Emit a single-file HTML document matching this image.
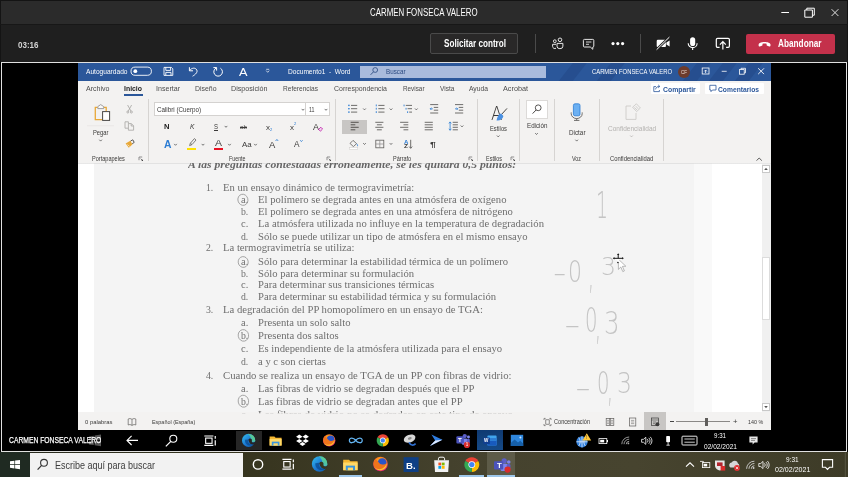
<!DOCTYPE html>
<html lang="es">
<head>
<meta charset="utf-8">
<title>CARMEN FONSECA VALERO</title>
<style>
html,body{margin:0;padding:0;background:#000;}
body{width:848px;height:477px;position:relative;overflow:hidden;font-family:"Liberation Sans", sans-serif;}
#bg div{position:absolute;}
span.s,span.r,span.l{position:absolute;white-space:pre;transform-origin:0 50%;}
span.s{font-family:"Liberation Sans", sans-serif;}
span.r{font-family:"Liberation Serif", serif;}
span.l{font-family:"DejaVu Sans Light", "DejaVu Sans", sans-serif;}
svg#ic{position:absolute;left:0;top:0;}
#tx,#tx2{opacity:0.999;}
</style>
</head>
<body>
<div id="bg">
<div style="left:0px;top:0px;width:848px;height:24px;background:#2b2b2b;"></div>
<div style="left:0px;top:24px;width:848px;height:38px;background:#1f1f1f;"></div>
<div style="left:0px;top:0px;width:848px;height:1px;background:#141414;"></div>
<div style="left:0px;top:0px;width:1px;height:62px;background:#141414;"></div>
<div style="left:847px;top:0px;width:1px;height:62px;background:#141414;"></div>
<div style="left:0px;top:23.6px;width:848px;height:1.0px;background:#171717;"></div>
<div style="left:430px;top:33px;width:88px;height:20.5px;background:#292828;border:1px solid #4a4a4a;box-sizing:border-box;border-radius:2px;"></div>
<div style="left:535px;top:34px;width:1px;height:19px;background:#4a4a4a;"></div>
<div style="left:640px;top:34px;width:1px;height:19px;background:#4a4a4a;"></div>
<div style="left:745.5px;top:33.5px;width:89.0px;height:20.0px;background:#c4314b;border-radius:2px;"></div>
<div style="left:1px;top:62px;width:846px;height:389.7px;background:#000;border:1px solid #e0e0e0;border-bottom-width:1.5px;box-sizing:border-box;"></div>
<div style="left:78px;top:63px;width:692.5px;height:17.5px;background:#2b579a;"></div>
<div style="left:78px;top:80.5px;width:692.5px;height:82.0px;background:#f3f2f1;"></div>
<div style="left:78px;top:162.5px;width:692.5px;height:249.8px;background:#ffffff;"></div>
<div style="left:93.6px;top:163px;width:600.4px;height:249.3px;background:#f4f4f4;"></div>
<div style="left:694px;top:163px;width:18px;height:249.3px;background:#f9f9f9;"></div>
<div style="left:78px;top:162.5px;width:692.5px;height:1.5px;background:linear-gradient(#d0d0d0,rgba(230,230,230,0));"></div>
<div style="left:78px;top:412.3px;width:692.5px;height:17.7px;background:#f3f2f1;"></div>
<div style="left:761.5px;top:164px;width:9.0px;height:248.3px;background:#f0f0f0;"></div>
<div style="left:762px;top:165px;width:8px;height:8px;background:#fff;border:1px solid #c8c8c8;box-sizing:border-box;"></div>
<div style="left:762px;top:403px;width:8px;height:8px;background:#fff;border:1px solid #c8c8c8;box-sizing:border-box;"></div>
<div style="left:762.4px;top:257.4px;width:7.5px;height:62.3px;background:#ffffff;border:1px solid #dcdcdc;box-sizing:border-box;"></div>
<div style="left:566px;top:63px;width:14px;height:17.5px;background:rgba(10,20,70,0.13);transform:skewX(-38deg);"></div>
<div style="left:604px;top:63px;width:14px;height:17.5px;background:rgba(10,20,70,0.13);transform:skewX(-38deg);"></div>
<div style="left:690px;top:63px;width:14px;height:17.5px;background:rgba(10,20,70,0.13);transform:skewX(-38deg);"></div>
<div style="left:716px;top:63px;width:14px;height:17.5px;background:rgba(10,20,70,0.13);transform:skewX(-38deg);"></div>
<div style="left:742px;top:63px;width:14px;height:17.5px;background:rgba(10,20,70,0.13);transform:skewX(-38deg);"></div>
<div style="left:360px;top:65.5px;width:186px;height:12.0px;background:#a9bbdc;"></div>
<div style="left:678px;top:65.5px;width:12px;height:12.0px;background:#6d3b2c;border-radius:50%;"></div>
<div style="left:123.5px;top:94px;width:19.0px;height:1.5px;background:#2b579a;"></div>
<div style="left:650.5px;top:83px;width:49.5px;height:11.3px;background:#ffffff;border-radius:1px;"></div>
<div style="left:705px;top:83px;width:58.5px;height:11.3px;background:#ffffff;border-radius:1px;"></div>
<div style="left:147.5px;top:99px;width:1.0px;height:62px;background:#d6d4d2;"></div>
<div style="left:335.2px;top:99px;width:1.0px;height:62px;background:#d6d4d2;"></div>
<div style="left:477.0px;top:99px;width:1.0px;height:62px;background:#d6d4d2;"></div>
<div style="left:519.0px;top:99px;width:1.0px;height:62px;background:#d6d4d2;"></div>
<div style="left:553.8px;top:99px;width:1.0px;height:62px;background:#d6d4d2;"></div>
<div style="left:598.7px;top:99px;width:1.0px;height:62px;background:#d6d4d2;"></div>
<div style="left:663.3px;top:99px;width:1.0px;height:62px;background:#d6d4d2;"></div>
<div style="left:154.4px;top:102px;width:152.0px;height:14px;background:#ffffff;border:1px solid #d4d2d0;box-sizing:border-box;"></div>
<div style="left:306.4px;top:102px;width:23.2px;height:14px;background:#ffffff;border:1px solid #d4d2d0;border-left:none;box-sizing:border-box;"></div>
<div style="left:214px;top:148px;width:9px;height:2.2px;background:#e81123;"></div>
<div style="left:187.3px;top:148px;width:9.2px;height:2.2px;background:#ffe100;"></div>
<div style="left:342px;top:119.5px;width:24.8px;height:14.2px;background:#c8c6c4;"></div>
<div style="left:525.5px;top:100.3px;width:22.2px;height:18.3px;background:#ffffff;border:1px solid #dcdad8;box-sizing:border-box;"></div>
<div style="left:644px;top:412.3px;width:22px;height:17.7px;background:#c8c6c4;"></div>
<div style="left:676.4px;top:421.3px;width:53.6px;height:0.7px;background:#8a8886;"></div>
<div style="left:705.2px;top:417.6px;width:2.7px;height:8.0px;background:#605e5c;"></div>
<div style="left:670px;top:421.3px;width:4px;height:0.7px;background:#444;"></div>
<div style="left:236px;top:431px;width:26px;height:19px;background:#262626;"></div>
<div style="left:477px;top:430px;width:26.2px;height:20px;background:linear-gradient(#0f3a72,#164a86);"></div>
<div style="left:0px;top:452px;width:848px;height:25px;background:linear-gradient(90deg,#26281c 0%,#37351f 30%,#45422e 55%,#47442f 75%,#3d3b27 100%);"></div>
<div style="left:0px;top:452px;width:29.5px;height:25px;background:#1f2a22;"></div>
<div style="left:29.5px;top:452.6px;width:213.5px;height:24.4px;background:#f2f2f2;"></div>
<div style="left:487px;top:452px;width:28px;height:25px;background:#5d5b48;"></div>
<div style="left:338.8px;top:475px;width:23.7px;height:2px;background:#9ec7ea;"></div>
<div style="left:458.8px;top:475px;width:25.0px;height:2px;background:#9ec7ea;"></div>
<div style="left:487px;top:475px;width:28px;height:2px;background:#9ec7ea;"></div>
</div>
<div id="tx">
<span class="s" style="left:370px;top:8.12px;font-size:10px;line-height:10px;color:#ffffff;transform:scaleX(0.7875);">CARMEN FONSECA VALERO</span>
<span class="s" style="left:18px;top:39.86px;font-size:9.5px;line-height:9.5px;color:#d4d4d4;font-weight:700;transform:scaleX(0.8432);">03:16</span>
<span class="s" style="left:443.5px;top:39.22px;font-size:10px;line-height:10px;color:#ffffff;font-weight:700;transform:scaleX(0.8144);">Solicitar control</span>
<span class="s" style="left:777.5px;top:39.22px;font-size:10px;line-height:10px;color:#ffffff;font-weight:700;transform:scaleX(0.8242);">Abandonar</span>
<span class="s" style="left:86px;top:67.89px;font-size:7.4px;line-height:7.4px;color:#ffffff;transform:scaleX(0.8937);">Autoguardado</span>
<span class="s" style="left:288px;top:67.89px;font-size:7.4px;line-height:7.4px;color:#ffffff;transform:scaleX(0.8915);">Documento1  -  Word</span>
<span class="s" style="left:385.5px;top:68.28px;font-size:7.2px;line-height:7.2px;color:#2b4a80;transform:scaleX(0.8715);">Buscar</span>
<span class="s" style="left:592px;top:68.28px;font-size:7.2px;line-height:7.2px;color:#ffffff;transform:scaleX(0.8153);">CARMEN FONSECA VALERO</span>
<span class="s" style="left:681px;top:70.8px;font-size:4.5px;line-height:4.5px;color:#e8d8d0;transform:scaleX(1.0000);">CF</span>
<span class="s" style="left:239px;top:66.23px;font-size:11.6px;line-height:11.6px;color:#ffffff;transform:scaleX(1.0990);">A</span>
<span class="s" style="left:85.5px;top:85.39px;font-size:8px;line-height:8px;color:#4c4c4c;transform:scaleX(0.8806);">Archivo</span>
<span class="s" style="left:156px;top:85.39px;font-size:8px;line-height:8px;color:#4c4c4c;transform:scaleX(0.8848);">Insertar</span>
<span class="s" style="left:194.5px;top:85.39px;font-size:8px;line-height:8px;color:#4c4c4c;transform:scaleX(0.8632);">Diseño</span>
<span class="s" style="left:231px;top:85.39px;font-size:8px;line-height:8px;color:#4c4c4c;transform:scaleX(0.8923);">Disposición</span>
<span class="s" style="left:283px;top:85.39px;font-size:8px;line-height:8px;color:#4c4c4c;transform:scaleX(0.8199);">Referencias</span>
<span class="s" style="left:334px;top:85.39px;font-size:8px;line-height:8px;color:#4c4c4c;transform:scaleX(0.8697);">Correspondencia</span>
<span class="s" style="left:402.5px;top:85.39px;font-size:8px;line-height:8px;color:#4c4c4c;transform:scaleX(0.7926);">Revisar</span>
<span class="s" style="left:439.5px;top:85.39px;font-size:8px;line-height:8px;color:#4c4c4c;transform:scaleX(0.8220);">Vista</span>
<span class="s" style="left:469px;top:85.39px;font-size:8px;line-height:8px;color:#4c4c4c;transform:scaleX(0.8427);">Ayuda</span>
<span class="s" style="left:503px;top:85.39px;font-size:8px;line-height:8px;color:#4c4c4c;transform:scaleX(0.9065);">Acrobat</span>
<span class="s" style="left:124px;top:85.39px;font-size:8px;line-height:8px;color:#222222;font-weight:700;transform:scaleX(0.8616);">Inicio</span>
<span class="s" style="left:663px;top:85.59px;font-size:7.6px;line-height:7.6px;color:#2b579a;font-weight:700;transform:scaleX(0.9037);">Compartir</span>
<span class="s" style="left:718px;top:85.59px;font-size:7.6px;line-height:7.6px;color:#2b579a;font-weight:700;transform:scaleX(0.8832);">Comentarios</span>
<span class="s" style="left:93px;top:128.89px;font-size:7.4px;line-height:7.4px;color:#3b3a39;transform:scaleX(0.7854);">Pegar</span>
<span class="s" style="left:92px;top:156.37px;font-size:6.4px;line-height:6.4px;color:#3b3a39;transform:scaleX(0.8707);">Portapapeles</span>
<span class="s" style="left:156.5px;top:106.28px;font-size:7.2px;line-height:7.2px;color:#3b3a39;transform:scaleX(0.8692);">Calibri (Cuerpo)</span>
<span class="s" style="left:308.5px;top:106.28px;font-size:7.2px;line-height:7.2px;color:#3b3a39;transform:scaleX(0.7364);">11</span>
<span class="s" style="left:164.3px;top:122.79px;font-size:7.6px;line-height:7.6px;color:#222;font-weight:700;transform:scaleX(1.0028);">N</span>
<span class="s" style="left:189.5px;top:122.79px;font-size:7.6px;line-height:7.6px;color:#3b3a39;font-style:italic;transform:scaleX(0.8862);">K</span>
<span class="s" style="left:213.5px;top:122.79px;font-size:7.6px;line-height:7.6px;color:#3b3a39;transform:scaleX(0.7877);text-decoration:underline;">S</span>
<span class="s" style="left:239.5px;top:124.47px;font-size:6.2px;line-height:6.2px;color:#3b3a39;transform:scaleX(1.0159);text-decoration:line-through;">ab</span>
<span class="s" style="left:266px;top:124.19px;font-size:7.4px;line-height:7.4px;color:#3b3a39;transform:scaleX(1.0802);">x</span>
<span class="s" style="left:270.3px;top:128.45px;font-size:4.2px;line-height:4.2px;color:#2b7cd3;transform:scaleX(0.9813);">2</span>
<span class="s" style="left:290px;top:124.19px;font-size:7.4px;line-height:7.4px;color:#3b3a39;transform:scaleX(1.0802);">x</span>
<span class="s" style="left:294.3px;top:121.95px;font-size:4.2px;line-height:4.2px;color:#2b7cd3;transform:scaleX(0.9813);">2</span>
<span class="s" style="left:312.5px;top:122.6px;font-size:9px;line-height:9px;color:#3b3a39;transform:scaleX(0.9974);">A</span>
<span class="s" style="left:163.5px;top:139.62px;font-size:10px;line-height:10px;color:#2b7cd3;font-weight:700;transform:scaleX(1.0367);">A</span>
<span class="s" style="left:214.8px;top:139.1px;font-size:9px;line-height:9px;color:#3b3a39;transform:scaleX(1.1636);">A</span>
<span class="s" style="left:242px;top:140.99px;font-size:7.8px;line-height:7.8px;color:#3b3a39;transform:scaleX(1.0160);">Aa</span>
<span class="s" style="left:268.7px;top:140.21px;font-size:9.4px;line-height:9.4px;color:#3b3a39;transform:scaleX(1.0055);">A</span>
<span class="s" style="left:294px;top:141.29px;font-size:8.2px;line-height:8.2px;color:#3b3a39;transform:scaleX(1.0057);">A</span>
<span class="s" style="left:229px;top:156.37px;font-size:6.4px;line-height:6.4px;color:#3b3a39;transform:scaleX(0.8289);">Fuente</span>
<span class="s" style="left:392.8px;top:156.37px;font-size:6.4px;line-height:6.4px;color:#3b3a39;transform:scaleX(0.8680);">Párrafo</span>
<span class="s" style="left:403.6px;top:139.66px;font-size:5.4px;line-height:5.4px;color:#2b7cd3;font-weight:700;transform:scaleX(1.1264);">A</span>
<span class="s" style="left:403.8px;top:144.46px;font-size:5.4px;line-height:5.4px;color:#3b3a39;font-weight:700;transform:scaleX(1.2133);">Z</span>
<span class="s" style="left:429.6px;top:141.39px;font-size:7.6px;line-height:7.6px;color:#3b3a39;font-weight:700;transform:scaleX(1.3697);">¶</span>
<span class="l" style="left:490.6px;top:103.47px;font-size:20px;line-height:20px;color:#3b3a39;transform:scaleX(0.8329);">A</span>
<span class="s" style="left:490px;top:124.79px;font-size:7.6px;line-height:7.6px;color:#3b3a39;transform:scaleX(0.7598);">Estilos</span>
<span class="s" style="left:485.6px;top:156.37px;font-size:6.4px;line-height:6.4px;color:#3b3a39;transform:scaleX(0.8551);">Estilos</span>
<span class="s" style="left:526.6px;top:122.29px;font-size:7.6px;line-height:7.6px;color:#3b3a39;transform:scaleX(0.8191);">Edición</span>
<span class="s" style="left:568.5px;top:128.79px;font-size:7.6px;line-height:7.6px;color:#3b3a39;transform:scaleX(0.8315);">Dictar</span>
<span class="s" style="left:572px;top:156.37px;font-size:6.4px;line-height:6.4px;color:#3b3a39;transform:scaleX(0.8433);">Voz</span>
<span class="s" style="left:607.5px;top:124.79px;font-size:7.6px;line-height:7.6px;color:#b4b2b0;transform:scaleX(0.8583);">Confidencialidad</span>
<span class="s" style="left:609.6px;top:156.37px;font-size:6.4px;line-height:6.4px;color:#3b3a39;transform:scaleX(0.9140);">Confidencialidad</span>
<span class="s" style="left:84.6px;top:419.47px;font-size:6.2px;line-height:6.2px;color:#3b3a39;transform:scaleX(0.9479);">0 palabras</span>
<span class="s" style="left:151.8px;top:419.47px;font-size:6.2px;line-height:6.2px;color:#3b3a39;transform:scaleX(0.8783);">Español (España)</span>
<span class="s" style="left:554px;top:419.37px;font-size:6.4px;line-height:6.4px;color:#3b3a39;transform:scaleX(0.8734);">Concentración</span>
<span class="s" style="left:747.5px;top:419.47px;font-size:6.2px;line-height:6.2px;color:#3b3a39;transform:scaleX(0.8663);">140 %</span>
<span class="s" style="left:733px;top:418.29px;font-size:8px;line-height:8px;color:#3b3a39;transform:scaleX(0.9632);">+</span>
<span class="r" style="left:188px;top:158.92px;font-size:11.2px;line-height:11.2px;color:#666666;font-weight:700;font-style:italic;transform:scaleX(1.0404);clip-path:inset(4.2px 0 0 0);">A las preguntas contestadas erróneamente, se les quitará 0,5 puntos:</span>
<span class="r" style="left:206px;top:181.54px;font-size:10.7px;line-height:10.7px;color:#6e6e6e;transform:scaleX(0.9107);">1.</span>
<span class="r" style="left:223px;top:181.54px;font-size:10.7px;line-height:10.7px;color:#6e6e6e;transform:scaleX(0.9931);">En un ensayo dinámico de termogravimetría:</span>
<span class="r" style="left:241px;top:193.54px;font-size:10.7px;line-height:10.7px;color:#6e6e6e;transform:scaleX(0.9836);">a.</span>
<span class="r" style="left:257.8px;top:193.54px;font-size:10.7px;line-height:10.7px;color:#6e6e6e;transform:scaleX(0.9980);">El polímero se degrada antes en una atmósfera de oxígeno</span>
<span class="r" style="left:241px;top:205.74px;font-size:10.7px;line-height:10.7px;color:#6e6e6e;transform:scaleX(0.9107);">b.</span>
<span class="r" style="left:257.8px;top:205.74px;font-size:10.7px;line-height:10.7px;color:#6e6e6e;transform:scaleX(0.9976);">El polímero se degrada antes en una atmósfera de nitrógeno</span>
<span class="r" style="left:241px;top:218.24px;font-size:10.7px;line-height:10.7px;color:#6e6e6e;transform:scaleX(0.9836);">c.</span>
<span class="r" style="left:257.8px;top:218.24px;font-size:10.7px;line-height:10.7px;color:#6e6e6e;transform:scaleX(0.9987);">La atmósfera utilizada no influye en la temperatura de degradación</span>
<span class="r" style="left:241px;top:230.54px;font-size:10.7px;line-height:10.7px;color:#6e6e6e;transform:scaleX(0.9107);">d.</span>
<span class="r" style="left:257.8px;top:230.54px;font-size:10.7px;line-height:10.7px;color:#6e6e6e;transform:scaleX(0.9989);">Sólo se puede utilizar un tipo de atmósfera en el mismo ensayo</span>
<span class="r" style="left:206px;top:242.24px;font-size:10.7px;line-height:10.7px;color:#6e6e6e;transform:scaleX(0.9107);">2.</span>
<span class="r" style="left:223px;top:242.24px;font-size:10.7px;line-height:10.7px;color:#6e6e6e;transform:scaleX(0.9957);">La termogravimetría se utiliza:</span>
<span class="r" style="left:241px;top:255.84px;font-size:10.7px;line-height:10.7px;color:#6e6e6e;transform:scaleX(0.9836);">a.</span>
<span class="r" style="left:257.8px;top:255.84px;font-size:10.7px;line-height:10.7px;color:#6e6e6e;transform:scaleX(0.9965);">Sólo para determinar la estabilidad térmica de un polímero</span>
<span class="r" style="left:241px;top:267.54px;font-size:10.7px;line-height:10.7px;color:#6e6e6e;transform:scaleX(0.9107);">b.</span>
<span class="r" style="left:257.8px;top:267.54px;font-size:10.7px;line-height:10.7px;color:#6e6e6e;transform:scaleX(0.9968);">Sólo para determinar su formulación</span>
<span class="r" style="left:241px;top:279.44px;font-size:10.7px;line-height:10.7px;color:#6e6e6e;transform:scaleX(0.9836);">c.</span>
<span class="r" style="left:257.8px;top:279.44px;font-size:10.7px;line-height:10.7px;color:#6e6e6e;transform:scaleX(0.9961);">Para determinar sus transiciones térmicas</span>
<span class="r" style="left:241px;top:291.24px;font-size:10.7px;line-height:10.7px;color:#6e6e6e;transform:scaleX(0.9107);">d.</span>
<span class="r" style="left:257.8px;top:291.24px;font-size:10.7px;line-height:10.7px;color:#6e6e6e;transform:scaleX(0.9970);">Para determinar su estabilidad térmica y su formulación</span>
<span class="r" style="left:206px;top:303.94px;font-size:10.7px;line-height:10.7px;color:#6e6e6e;transform:scaleX(0.9107);">3.</span>
<span class="r" style="left:223px;top:303.94px;font-size:10.7px;line-height:10.7px;color:#6e6e6e;transform:scaleX(0.9988);">La degradación del PP homopolímero en un ensayo de TGA:</span>
<span class="r" style="left:241px;top:316.84px;font-size:10.7px;line-height:10.7px;color:#6e6e6e;transform:scaleX(0.9836);">a.</span>
<span class="r" style="left:257.8px;top:316.84px;font-size:10.7px;line-height:10.7px;color:#6e6e6e;transform:scaleX(0.9955);">Presenta un solo salto</span>
<span class="r" style="left:241px;top:329.74px;font-size:10.7px;line-height:10.7px;color:#6e6e6e;transform:scaleX(0.9107);">b.</span>
<span class="r" style="left:257.8px;top:329.74px;font-size:10.7px;line-height:10.7px;color:#6e6e6e;transform:scaleX(0.9994);">Presenta dos saltos</span>
<span class="r" style="left:241px;top:343.34px;font-size:10.7px;line-height:10.7px;color:#6e6e6e;transform:scaleX(0.9836);">c.</span>
<span class="r" style="left:257.8px;top:343.34px;font-size:10.7px;line-height:10.7px;color:#6e6e6e;transform:scaleX(0.9986);">Es independiente de la atmósfera utilizada para el ensayo</span>
<span class="r" style="left:241px;top:356.34px;font-size:10.7px;line-height:10.7px;color:#6e6e6e;transform:scaleX(0.9107);">d.</span>
<span class="r" style="left:257.8px;top:356.34px;font-size:10.7px;line-height:10.7px;color:#6e6e6e;transform:scaleX(0.9961);">a y c son ciertas</span>
<span class="r" style="left:206px;top:369.84px;font-size:10.7px;line-height:10.7px;color:#6e6e6e;transform:scaleX(0.9107);">4.</span>
<span class="r" style="left:223px;top:369.84px;font-size:10.7px;line-height:10.7px;color:#6e6e6e;transform:scaleX(1.0031);">Cuando se realiza un ensayo de TGA de un PP con fibras de vidrio:</span>
<span class="r" style="left:241px;top:382.74px;font-size:10.7px;line-height:10.7px;color:#6e6e6e;transform:scaleX(0.9836);">a.</span>
<span class="r" style="left:257.8px;top:382.74px;font-size:10.7px;line-height:10.7px;color:#6e6e6e;transform:scaleX(1.0001);">Las fibras de vidrio se degradan después que el PP</span>
<span class="r" style="left:241px;top:395.74px;font-size:10.7px;line-height:10.7px;color:#6e6e6e;transform:scaleX(0.9107);">b.</span>
<span class="r" style="left:257.8px;top:395.74px;font-size:10.7px;line-height:10.7px;color:#6e6e6e;transform:scaleX(1.0010);">Las fibras de vidrio se degradan antes que el PP</span>
<span class="r" style="left:241px;top:408.54px;font-size:10.7px;line-height:10.7px;color:#6e6e6e;transform:scaleX(0.9836);clip-path:inset(0 0 5.9px 0);">c.</span>
<span class="r" style="left:257.8px;top:408.54px;font-size:10.7px;line-height:10.7px;color:#6e6e6e;transform:scaleX(1.0336);clip-path:inset(0 0 5.9px 0);">Las fibras de vidrio no se degradan en este tipo de ensayo</span>
<span class="l" style="left:596px;top:186.35px;font-size:38px;line-height:38px;color:#c4c4c4;transform:scaleX(0.4961);">1</span>
<span class="l" style="left:552.6px;top:258.22px;font-size:30px;line-height:30px;color:#c4c4c4;transform:scaleX(1.2375);">-</span>
<span class="l" style="left:568px;top:255.77px;font-size:31px;line-height:31px;color:#c4c4c4;transform:scaleX(0.7094);">0</span>
<span class="l" style="left:588px;top:251.28px;font-size:44px;line-height:44px;color:#c4c4c4;transform:scaleX(0.4286);">,</span>
<span class="l" style="left:601px;top:255.2px;font-size:24px;line-height:24px;color:#c4c4c4;transform:scaleX(0.9816);">3</span>
<span class="l" style="left:564px;top:309.92px;font-size:30px;line-height:30px;color:#c4c4c4;transform:scaleX(1.5330);">-</span>
<span class="l" style="left:584.8px;top:304.38px;font-size:33px;line-height:33px;color:#c4c4c4;transform:scaleX(0.5952);">0</span>
<span class="l" style="left:594.5px;top:302.28px;font-size:44px;line-height:44px;color:#c4c4c4;transform:scaleX(0.4286);">,</span>
<span class="l" style="left:604.4px;top:306.81px;font-size:32.5px;line-height:32.5px;color:#c4c4c4;transform:scaleX(0.7541);">3</span>
<span class="l" style="left:575px;top:373.22px;font-size:30px;line-height:30px;color:#c4c4c4;transform:scaleX(1.4776);">-</span>
<span class="l" style="left:597.3px;top:368.25px;font-size:31.5px;line-height:31.5px;color:#c4c4c4;transform:scaleX(0.6235);">0</span>
<span class="l" style="left:606.5px;top:364.28px;font-size:44px;line-height:44px;color:#c4c4c4;transform:scaleX(0.4286);">,</span>
<span class="l" style="left:617px;top:368.52px;font-size:28.7px;line-height:28.7px;color:#c4c4c4;transform:scaleX(0.8212);">3</span>
<span class="s" style="left:714px;top:433.32px;font-size:6.5px;line-height:6.5px;color:#ffffff;transform:scaleX(0.9481);">9:31</span>
<span class="s" style="left:704px;top:443.62px;font-size:6.5px;line-height:6.5px;color:#ffffff;transform:scaleX(1.0139);">02/02/2021</span>
<span class="s" style="left:55px;top:461.22px;font-size:10px;line-height:10px;color:#3c3c3c;transform:scaleX(0.8995);">Escribe aquí para buscar</span>
<span class="s" style="left:786.4px;top:455.89px;font-size:8px;line-height:8px;color:#ffffff;transform:scaleX(0.8088);">9:31</span>
<span class="s" style="left:775.3px;top:466.29px;font-size:8px;line-height:8px;color:#ffffff;transform:scaleX(0.8840);">02/02/2021</span>
</div>
<svg id="ic" width="848" height="477" viewBox="0 0 848 477" fill="none">
<g stroke="#e6e6e6" stroke-width="1"><circle cx="554.8" cy="41.2" r="1.4"/><circle cx="560" cy="39.8" r="1.8"/><path d="M557 43.4H562.9V46.2A2.95 2.5 0 0 1 557 46.2Z"/><path d="M556 44.3H552.6V46.4A2.2 2.2 0 0 0 556 48.2"/></g>
<g stroke="#e6e6e6" stroke-width="1"><path d="M584.4 39.4H592.8A1 1 0 0 1 593.8 40.4V46A1 1 0 0 1 592.8 47V49.3L590.3 47H584.4A1 1 0 0 1 583.4 46V40.4A1 1 0 0 1 584.4 39.4Z"/><path d="M586 42H591.4M586 44.3H589" stroke-width="0.9"/></g>
<g fill="#ffffff"><circle cx="613" cy="43.6" r="1.6"/><circle cx="617.8" cy="43.6" r="1.6"/><circle cx="622.6" cy="43.6" r="1.6"/></g>
<rect x="656.7" y="39.8" width="9.2" height="7.3" rx="1.2" fill="#ffffff"/><path d="M666.4 42.6L669.6 40.4V46.6L666.4 44.4Z" fill="#ffffff"/><path d="M669.6 36.9L656.3 49.9" stroke="#1f1f1f" stroke-width="2.6"/><path d="M669.4 37.1L656.6 49.7" stroke="#ffffff" stroke-width="1"/>
<rect x="690.1" y="37.2" width="5.1" height="8.8" rx="2.55" fill="#ffffff"/><path d="M688.2 43.2A4.45 4.45 0 0 0 697.1 43.2M692.65 47.6V50" stroke="#ffffff" stroke-width="1.1"/>
<g stroke="#ffffff" stroke-width="1.2"><path d="M719.6 47.4H717.6A1.3 1.3 0 0 1 716.3 46.1V39.6A1.3 1.3 0 0 1 717.6 38.3H728.1A1.3 1.3 0 0 1 729.4 39.6V46.1A1.3 1.3 0 0 1 728.1 47.4H726.1"/><path d="M722.85 49.4V42M719.9 44.6L722.85 41.6L725.8 44.6"/></g>
<path d="M758.6 44.6C758.6 41.2 770.5 41.2 770.5 44.6V45.6C770.5 46.3 769.9 46.6 769.3 46.4L767.3 45.8C766.8 45.6 766.6 45.2 766.6 44.7V43.8C765.2 43.3 763.9 43.3 762.5 43.8V44.7C762.5 45.2 762.3 45.6 761.8 45.8L759.8 46.4C759.2 46.6 758.6 46.3 758.6 45.6Z" fill="#ffffff"/>
<path d="M781.3 12.5H789" stroke="#ffffff" stroke-width="1"/><path d="M804.8 10H812.4V17.2H804.8Z" stroke="#ffffff" stroke-width="1"/><path d="M806.8 10V8.2H814.3V15.2H812.4" stroke="#ffffff" stroke-width="1"/><path d="M831.6 9.2L838.4 16M838.4 9.2L831.6 16" stroke="#e0e0e0" stroke-width="1"/>
<rect x="131" y="67.1" width="20.4" height="8.2" rx="4.1" stroke="#ffffff" stroke-width="0.9"/><circle cx="135.3" cy="71.2" r="1.9" fill="#ffffff"/>
<g stroke="#ffffff" stroke-width="0.9"><path d="M164 67.4H171.4L172.8 68.8V75.4H164Z"/><path d="M165.8 67.4V70.4H170.6V67.4M165.8 75.4V72.4H171V75.4"/></g>
<g stroke="#ffffff" stroke-width="1"><path d="M189.4 67.2V70.8H193"/><path d="M189.6 70.6C191.6 67.6 195.6 67.4 196.8 70C197.8 72.2 195.6 74.4 192.6 76.2"/></g>
<g stroke="#ffffff" stroke-width="1"><path d="M213.4 67.6H216.6V70.6"/><path d="M216.2 68A4.3 4.3 0 1 0 220.4 68.2"/></g>
<path d="M266.2 69.3H269.2" stroke="#ffffff" stroke-width="0.7"/><path d="M266.2 70.6L267.7 72.3L269.2 70.6" stroke="#ffffff" stroke-width="0.7"/>
<circle cx="375.2" cy="70" r="2.4" stroke="#2b4a80" stroke-width="0.8"/><path d="M373.5 71.8L370.6 74.8" stroke="#2b4a80" stroke-width="0.9"/>
<g stroke="#ffffff" stroke-width="0.8"><rect x="702.2" y="68" width="6.8" height="6"/><path d="M705.6 73V70.2M704.3 71.4L705.6 70L706.9 71.4"/><path d="M721.7 71.3H726.7"/><rect x="739.6" y="69.6" width="4.6" height="4.6"/><path d="M741 69.6V68.3H745.5V72.8H744.2"/><path d="M758.2 68.3L764 74.1M764 68.3L758.2 74.1" stroke-width="0.9"/></g>
<g stroke="#2b579a" stroke-width="0.8"><path d="M656 86.6H653.8V91.6H659.4V90"/><path d="M655.6 89.4C655.8 87.4 657.4 86.4 659.6 86.4M658.2 84.9L659.8 86.4L658.2 87.9"/></g>
<path d="M709.8 85.3H716V90H712.4L711 91.6V90H709.8Z" stroke="#2b579a" stroke-width="0.8"/>
<path d="M97.6 107.4H95.3V119.6H102.2M104 107.4H106.2V111" stroke="#e8a838" stroke-width="1.3"/><path d="M97.8 108.6V106.6L100.7 104.6L103.7 106.6V108.6Z" fill="#fafafa" stroke="#8a8886" stroke-width="0.8"/><rect x="102.6" y="111.6" width="7" height="8.8" fill="#ffffff" stroke="#484644" stroke-width="1"/>
<path d="M87 125.7H114" stroke="#e4e2e0" stroke-width="0.6"/>
<path d="M99.3 139.70000000000002L100.6 141.1L101.89999999999999 139.70000000000002" stroke="#555" stroke-width="0.8"/>
<g stroke="#a6a4a2" stroke-width="0.8"><path d="M127.6 105L131 111.2M131.6 105L128.2 111.2"/><circle cx="127.8" cy="112" r="1"/><circle cx="131.4" cy="112" r="1"/></g>
<g stroke="#a6a4a2" stroke-width="0.8"><path d="M128.4 123.6V121.8H125V128.2H128.2"/><path d="M128.4 123.6H131.4L133.6 125.8V130.2H128.4Z"/><path d="M131.2 123.8V126H133.4"/></g>
<path d="M125.6 143.6L130.4 140.8L132.4 144.6L128.8 147.8Z" fill="#e8a838"/><path d="M130.6 141L132.8 139.8L134.2 142.4L132.2 143.8" stroke="#484644" stroke-width="0.9"/><path d="M127.4 144.6L129.6 146.4" stroke="#fff" stroke-width="0.6"/>
<path d="M139 157H142.2M139 157V160.2" stroke="#666" stroke-width="0.7"/><path d="M143 159.2V161H141.2Z" fill="#444"/><path d="M140.7 158.7L142.6 160.6" stroke="#444" stroke-width="0.7"/>
<path d="M301.7 108.89999999999999L303 110.3L304.3 108.89999999999999" stroke="#555" stroke-width="0.8"/>
<path d="M324.7 108.89999999999999L326 110.3L327.3 108.89999999999999" stroke="#555" stroke-width="0.8"/>
<path d="M224.7 125.89999999999999L226 127.3L227.3 125.89999999999999" stroke="#555" stroke-width="0.8"/>
<path d="M174.2 143.9L175.5 145.29999999999998L176.8 143.9" stroke="#555" stroke-width="0.8"/>
<path d="M201.7 143.9L203 145.29999999999998L204.3 143.9" stroke="#555" stroke-width="0.8"/>
<path d="M228.2 143.9L229.5 145.29999999999998L230.8 143.9" stroke="#555" stroke-width="0.8"/>
<path d="M254.2 143.9L255.5 145.29999999999998L256.8 143.9" stroke="#555" stroke-width="0.8"/>
<path d="M318.6 129.4L320.8 127.2L322.6 129L320.4 131.2Z" stroke="#b4009e" stroke-width="0.7" fill="#f3d0ee"/>
<path d="M189.6 145.6L190.4 143.2L194.4 138.6L196 140L192 144.6Z" stroke="#605e5c" stroke-width="0.8"/><path d="M190.4 143.2L192 144.6" stroke="#605e5c" stroke-width="0.7"/>
<path d="M275.6 141L276.9 139.4L278.2 141" stroke="#2b7cd3" stroke-width="0.8"/><path d="M300.2 140.2L301.4 141.6L302.6 140.2" stroke="#2b7cd3" stroke-width="0.8"/>
<path d="M327 157H330.2M327 157V160.2" stroke="#666" stroke-width="0.7"/><path d="M331 159.2V161H329.2Z" fill="#444"/><path d="M328.7 158.7L330.6 160.6" stroke="#444" stroke-width="0.7"/>
<path d="M351 105.4H357.2M351 108.7H357.2M351 112.1H357.2" stroke="#605e5c" stroke-width="0.9"/>
<rect x="348.2" y="104.7" width="1.4" height="1.4" fill="#2b7cd3"/><rect x="348.2" y="108.0" width="1.4" height="1.4" fill="#2b7cd3"/><rect x="348.2" y="111.39999999999999" width="1.4" height="1.4" fill="#2b7cd3"/>
<path d="M363.2 108.5L364.5 109.9L365.8 108.5" stroke="#555" stroke-width="0.8"/>
<path d="M378.3 105.4H384.5M378.3 108.7H384.5M378.3 112.1H384.5" stroke="#605e5c" stroke-width="0.9"/>
<rect x="375.8" y="104.5" width="0.9" height="1.8" fill="#2b7cd3"/><rect x="375.8" y="107.8" width="0.9" height="1.8" fill="#2b7cd3"/><rect x="375.8" y="111.19999999999999" width="0.9" height="1.8" fill="#2b7cd3"/>
<path d="M389.7 108.5L391 109.9L392.3 108.5" stroke="#555" stroke-width="0.8"/>
<path d="M405.8 105.4H412.0M407.6 108.7H412.0M409.20000000000005 112.1H412.0" stroke="#605e5c" stroke-width="0.9"/>
<rect x="403.6" y="104.6" width="0.9" height="1.7" fill="#2b7cd3"/><rect x="405.6" y="107.9" width="0.9" height="1.7" fill="#2b7cd3"/><rect x="407.2" y="111.3" width="0.9" height="1.7" fill="#2b7cd3"/>
<path d="M415.0 108.5L416.3 109.9L417.6 108.5" stroke="#555" stroke-width="0.8"/>
<path d="M430.2 104.6H438.2M433.8 107.4H438.2M433.8 110.2H438.2M430.2 113H438.2" stroke="#605e5c" stroke-width="0.9"/>
<path d="M432.8 108.8H430.4M431.4 107.6L430.2 108.8L431.4 110" stroke="#2b7cd3" stroke-width="0.8"/>
<path d="M455 104.6H463.2M458.8 107.4H463.2M458.8 110.2H463.2M455 113H463.2" stroke="#605e5c" stroke-width="0.9"/>
<path d="M455 108.8H457.6M456.6 107.6L457.8 108.8L456.6 110" stroke="#2b7cd3" stroke-width="0.8"/>
<path d="M350.7 122.3H358.7M350.7 124.8H355.3M350.7 127.3H358.7M350.7 129.8H355.3" stroke="#484644" stroke-width="0.9"/>
<path d="M375.3 122.3H383.40000000000003M376.90000000000003 124.8H381.8M375.3 127.3H383.40000000000003M376.90000000000003 129.8H381.8" stroke="#605e5c" stroke-width="0.9"/>
<path d="M400.1 122.3H408.3M403.5 124.8H408.3M400.1 127.3H408.3M403.5 129.8H408.3" stroke="#605e5c" stroke-width="0.9"/>
<path d="M424.7 122.3H432.8M424.7 124.8H432.8M424.7 127.3H432.8M424.7 129.8H432.8" stroke="#605e5c" stroke-width="0.9"/>
<path d="M452.7 122.3H457.9M452.7 124.8H457.9M452.7 127.3H457.9M452.7 129.8H457.9" stroke="#605e5c" stroke-width="0.9"/>
<path d="M450.1 122V130.2M448.9 123.4L450.1 121.9L451.3 123.4M448.9 128.8L450.1 130.3L451.3 128.8" stroke="#2b7cd3" stroke-width="0.8"/>
<path d="M460.7 125.5L462 126.9L463.3 125.5" stroke="#555" stroke-width="0.8"/>
<path d="M353 140.4L356.6 143.6L353.4 146.6L350 143.4Z" stroke="#605e5c" stroke-width="0.8"/><path d="M356.8 143.8C357.8 145 357.8 146 357 146.4" stroke="#2b7cd3" stroke-width="0.8"/><rect x="349.6" y="147.6" width="8.2" height="1.6" fill="#ffffff" stroke="#c8c6c4" stroke-width="0.4"/>
<path d="M363.2 143.10000000000002L364.5 144.5L365.8 143.10000000000002" stroke="#555" stroke-width="0.8"/>
<rect x="375.8" y="140.2" width="8" height="7.6" stroke="#605e5c" stroke-width="0.8"/><path d="M379.8 140.2V147.8M375.8 144H383.8" stroke="#8a8886" stroke-width="0.7"/>
<path d="M389.7 143.10000000000002L391 144.5L392.3 143.10000000000002" stroke="#555" stroke-width="0.8"/>
<path d="M410.7 139.8V148.2M409.2 146.6L410.7 148.3L412.2 146.6" stroke="#605e5c" stroke-width="0.9"/>
<path d="M469 157H472.2M469 157V160.2" stroke="#666" stroke-width="0.7"/><path d="M473 159.2V161H471.2Z" fill="#444"/><path d="M470.7 158.7L472.6 160.6" stroke="#444" stroke-width="0.7"/>
<path d="M507 108.4L501.4 114.6" stroke="#484644" stroke-width="1"/><path d="M501.2 113.6C499 113.8 497.6 115.8 496.6 120.4C499.8 120.8 502.8 119.4 503.4 116Z" fill="#4a90e2"/>
<path d="M496.9 135.5L498.2 136.89999999999998L499.5 135.5" stroke="#555" stroke-width="0.8"/>
<path d="M511 157H514.2M511 157V160.2" stroke="#666" stroke-width="0.7"/><path d="M515 159.2V161H513.2Z" fill="#444"/><path d="M512.7 158.7L514.6 160.6" stroke="#444" stroke-width="0.7"/>
<circle cx="538.2" cy="107.8" r="2.9" stroke="#484644" stroke-width="0.9"/><path d="M536.2 109.9L532.6 113.6" stroke="#484644" stroke-width="1"/>
<path d="M535.2 133.10000000000002L536.5 134.5L537.8 133.10000000000002" stroke="#555" stroke-width="0.8"/>
<rect x="573.4" y="103.8" width="6.6" height="12" rx="1.6" fill="#6cb0f2" stroke="#2b7cd3" stroke-width="0.8"/><path d="M571.2 112.4V113.6A5.5 5 0 0 0 582.2 113.6V112.4M576.7 118.6V120.4M574 120.4H579.4" stroke="#605e5c" stroke-width="0.9"/>
<path d="M575.4000000000001 139.70000000000002L576.7 141.1L578.0 139.70000000000002" stroke="#555" stroke-width="0.8"/>
<g stroke="#c8c6c4" stroke-width="0.8"><path d="M631 106H626V119.4H636V113"/><path d="M632.6 107.2L636.4 103.8L640.4 108L636.6 111.6Z"/><path d="M634.4 107.4L637 110M635.8 106.2L638.2 108.8"/></g>
<path d="M630.2 135.5L631.5 136.89999999999998L632.8 135.5" stroke="#b4b2b0" stroke-width="0.8"/>
<path d="M756.6 160.6L759.2 158L761.8 160.6" stroke="#444" stroke-width="0.9"/>
<path d="M764.2 170L766 167.8L767.8 170Z" fill="#555"/><path d="M764.2 406L766 408.2L767.8 406Z" fill="#555"/>
<g stroke="#8a8a8a" stroke-width="0.7"><ellipse cx="242.9" cy="199.8" rx="5" ry="5.6" transform="rotate(-15 242.9 199.8)"/><ellipse cx="243.2" cy="262" rx="5" ry="5.4" transform="rotate(-10 243.2 262)"/><ellipse cx="243.4" cy="335.4" rx="5.2" ry="5.8" transform="rotate(-10 243.4 335.4)"/><ellipse cx="243.4" cy="401.2" rx="5.2" ry="6" transform="rotate(-10 243.4 401.2)"/></g>
<path d="M618.4 259.2V269.4L620.8 267L622.8 271.6L624.4 270.9L622.4 266.4L625.8 266.2Z" fill="#ffffff" stroke="#8c8c8c" stroke-width="0.6"/><path d="M618.2 254.2V262.4M613.6 258.3H623" stroke="#ffffff" stroke-width="2.2"/><path d="M618.2 254.6V258.3M613.8 258.3H622.8" stroke="#111" stroke-width="1"/><path d="M617 255L618.2 253.2L619.4 255ZM614.4 257.1L612.8 258.3L614.4 259.5ZM622.2 257.1L623.8 258.3L622.2 259.5Z" fill="#111"/><circle cx="617.9" cy="262.5" r="0.8" fill="#111"/>
<g stroke="#605e5c" stroke-width="0.7"><path d="M132 419.4C130.6 418.4 129.4 418.4 128.2 419V425C129.4 424.4 130.6 424.4 132 425.4C133.4 424.4 134.6 424.4 135.8 425V419C134.6 418.4 133.4 418.4 132 419.4ZM132 419.4V425.4"/></g>
<g stroke="#605e5c" stroke-width="0.7"><path d="M544 420V418.4H545.6M549.4 418.4H551V420M551 424V425.6H549.4M545.6 425.6H544V424"/><rect x="545.8" y="419.8" width="3.4" height="4.4"/></g>
<g stroke="#605e5c" stroke-width="0.7"><rect x="606.2" y="418.4" width="3.6" height="7"/><rect x="610.2" y="418.4" width="3.6" height="7"/><path d="M607 420.4H609M607 422H609M607 423.6H609M611 420.4H613M611 422H613M611 423.6H613" stroke-width="0.5"/></g>
<g stroke="#605e5c" stroke-width="0.7"><rect x="629.4" y="418" width="6.4" height="8"/><path d="M631 420.4H634.2M631 422H634.2M631 423.6H634.2" stroke-width="0.5"/></g>
<g stroke="#3b3a39" stroke-width="0.7"><rect x="651.4" y="418" width="7" height="7.6"/><path d="M651.4 420H658.4M653 422H656M653 423.6H655" stroke-width="0.5"/></g><circle cx="657.4" cy="424.2" r="2" fill="#3b3a39"/>
<defs><linearGradient id="edg" x1="0" y1="0" x2="1" y2="1"><stop offset="0" stop-color="#35c1f1"/><stop offset="0.55" stop-color="#1b75d0"/><stop offset="1" stop-color="#0c59a4"/></linearGradient><linearGradient id="edg2" x1="0" y1="1" x2="1" y2="0"><stop offset="0" stop-color="#2ea8e0"/><stop offset="1" stop-color="#6fdc6a"/></linearGradient><radialGradient id="ffx" cx="0.5" cy="0.4" r="0.6"><stop offset="0" stop-color="#ffd43a"/><stop offset="0.6" stop-color="#ff8a16"/><stop offset="1" stop-color="#e31587"/></radialGradient></defs>
<g fill="#6a6a6a" opacity="0.8"><path d="M89 436.4L93.8 435.7V440H89ZM94.6 435.6L101 434.6V440H94.6ZM89 440.8H93.8V445.1L89 444.4ZM94.6 440.8H101V446.2L94.6 445.2Z"/></g>
<path d="M138 440.4H127M131.6 435.8L127 440.4L131.6 445" stroke="#fff" stroke-width="1.1"/>
<circle cx="173.3" cy="438.8" r="3.5" stroke="#fff" stroke-width="1.1"/><path d="M170.8 441.4L165.8 446.4" stroke="#fff" stroke-width="1.2"/>
<g stroke="#fff" stroke-width="1.1"><rect x="205.668" y="438.068" width="6.384000000000001" height="5.264000000000001"/><path d="M204.3 436H213.42000000000002M204.3 445.4H213.42000000000002M215.244 436V438.82M215.244 440.23V445.4" stroke-width="1.2"/></g>
<circle cx="248.6" cy="440.4" r="6.6" fill="url(#edg)"/><path d="M247.94 433.93A6.6 6.6 0 0 1 255.20 441.19C253.88 442.71 251.57 442.71 249.92 441.06C251.90 438.42 249.92 435.45 247.94 433.93Z" fill="url(#edg2)"/><path d="M248.27 439.74C249.59 437.43 252.23 438.42 251.90 440.40C251.24 442.38 253.55 443.17 255.33 441.72L254.87 443.70C252.56 445.68 249.26 444.36 248.27 439.74Z" fill="#262626"/><path d="M244.97 439.74C244.64 445.02 249.92 447.00 253.88 444.36C250.58 445.35 247.28 443.04 248.27 439.41Z" fill="#0a4a90" opacity="0.75"/>
<path d="M269.6 436.448H274.40000000000003L275.6 437.8H281.6V445.59999999999997H269.6Z" fill="#f5b731"/><rect x="269.6" y="438.94399999999996" width="12" height="6.656000000000001" fill="#ffd968"/><rect x="271.76000000000005" y="441.64799999999997" width="7.68" height="3.9520000000000004" fill="#3a96dd"/><rect x="273.44" y="443.312" width="4.32" height="2.2880000000000003" fill="#ffd968"/>
<g fill="#fff"><path d="M299.3 434.6L302.5 436.7L299.3 438.8L296.1 436.7Z"/><path d="M305.7 434.6L308.9 436.7L305.7 438.8L302.5 436.7Z"/><path d="M299.3 438.9L302.5 441L299.3 443.1L296.1 441Z"/><path d="M305.7 438.9L308.9 441L305.7 443.1L302.5 441Z"/><path d="M302.5 441.9L305.6 443.9L302.5 446L299.4 443.9Z"/></g>
<circle cx="329.2" cy="440.4" r="6.2" fill="url(#ffx)"/><circle cx="330.56" cy="439.16" r="3.72" fill="#2a55c8"/><path d="M324.55 436.37C327.34 437.30 327.34 439.78 329.82 440.71C332.30 441.33 332.92 440.40 334.47 439.78C334.78 445.98 327.34 447.84 323.93 443.19C322.69 440.40 323.31 437.92 324.55 436.37Z" fill="#f0741c"/><path d="M334.47 439.78C334.78 445.98 327.34 447.84 323.93 443.19C327.96 446.29 332.92 444.74 334.47 439.78Z" fill="#ffc531"/>
<path d="M355.7 440.4C353.6 437.4 349.4 437.2 349.4 440.4C349.4 443.6 353.6 443.4 355.7 440.4C357.8 437.4 362.2 437.2 362.2 440.4C362.2 443.6 357.8 443.4 355.7 440.4Z" stroke="#63b3f0" stroke-width="1.3"/>
<path d="M382.8 440.4L377.52 437.35A6.1 6.1 0 0 1 388.08 437.35Z" fill="#ea4335"/><path d="M382.8 440.4L388.08 437.35A6.1 6.1 0 0 1 382.80 446.50Z" fill="#fbbc05"/><path d="M382.8 440.4L382.80 446.50A6.1 6.1 0 0 1 377.52 437.35Z" fill="#34a853"/><circle cx="382.8" cy="440.4" r="2.81" fill="#ffffff"/><circle cx="382.8" cy="440.4" r="2.20" fill="#4285f4"/>
<ellipse cx="409.6" cy="438.6" rx="6" ry="3.8" fill="#d8d8d8" transform="rotate(-20 409.6 438.6)"/><ellipse cx="409.8" cy="438.4" rx="2" ry="1.1" fill="#8a8a8a" transform="rotate(-20 409.8 438.4)"/><path d="M409 442.4C410.5 445.5 413.5 446 415.6 443.6" stroke="#2f6fd0" stroke-width="1.6"/>
<path d="M430 446L442.4 439.8L431.4 434.6L435.2 440.6Z" fill="#2f7de0"/><path d="M430 446L442.4 439.8L435.2 440.6Z" fill="#dfeaff"/>
<circle cx="464.70799999999997" cy="436.08000000000004" r="2.144" fill="#5b5fc7"/><circle cx="468.46" cy="437.072" r="1.474" fill="#7b83eb"/><rect x="461.76" y="438.56" width="6.03" height="6.2" rx="1.5" fill="#7b83eb"/><rect x="466.852" y="438.80800000000005" width="2.948" height="4.712000000000001" rx="1.2" fill="#5b5fc7"/><rect x="456.4" y="436.32800000000003" width="7.504000000000001" height="7.191999999999999" rx="1" fill="#4b53bc"/>
<circle cx="466.9" cy="444.9" r="3.1" fill="#d92c2c"/>
<rect x="487.4" y="435.6" width="9.2" height="10" rx="0.8" fill="#41a5ee"/><rect x="487.4" y="440.6" width="9.2" height="5" fill="#185abd"/><rect x="487.4" y="438.1" width="9.2" height="2.5" fill="#2b7cd3"/><rect x="483.3" y="437.4" width="6.6" height="6.6" rx="0.6" fill="#103f91"/>
<rect x="510.8" y="434.8" width="12.4" height="11.2" fill="#2f87dd"/><path d="M510.8 446V443L514.6 439.6L518 442.6L520.2 440.8L523.2 443.4V446Z" fill="#165fa8"/><circle cx="520.4" cy="437.6" r="1" fill="#cfe6ff"/>
<circle cx="582" cy="441.8" r="5.6" fill="#2f7fdc"/><path d="M582 436.2V447.4M576.4 441.8H587.6M578.6 437.6C580.6 439.6 580.6 444 578.6 446M585.4 437.6C583.4 439.6 583.4 444 585.4 446" stroke="#e8f1ff" stroke-width="0.8"/><path d="M586.8 433.2L591.2 440.6H582.4Z" fill="#ffc83d"/>
<rect x="599" y="438.6" width="7.8" height="5" stroke="#fff" stroke-width="0.8"/><rect x="600.2" y="439.8" width="4" height="2.6" fill="#fff"/><rect x="607" y="440" width="1" height="2.2" fill="#fff"/>
<g stroke="#a8a8a8" stroke-width="0.9"><path d="M621.8 444.2A7.4 7.2 0 0 1 629.1999999999999 437"/><path d="M624.02 444.2A5.18 5.04 0 0 1 629.1999999999999 439.16"/><path d="M626.24 444.2A2.9600000000000004 2.8800000000000003 0 0 1 629.1999999999999 441.32"/></g><circle cx="628.4" cy="443.4" r="0.9" fill="#a8a8a8"/>
<path d="M641.6 439.33H643.49L645.8000000000001 437.23V444.37L643.49 442.27000000000004H641.6Z" stroke="#fff" stroke-width="0.8"/><path d="M647.27 439.12A2.4 2.4 0 0 1 647.27 442.48M648.74 437.86A4 4 0 0 1 648.74 443.74M650.21 436.81A5.4 5.4 0 0 1 650.21 444.79" stroke="#fff" stroke-width="0.8"/>
<rect x="666.2" y="436" width="3.8" height="6.2" rx="0.8" fill="#fff"/><path d="M668.1 442.2V445.2M666.4 445.2H669.8" stroke="#fff" stroke-width="0.8"/>
<rect x="682" y="436.2" width="15" height="8.8" rx="0.8" stroke="#fff" stroke-width="0.9"/><path d="M684.4 439H694.8M684.4 442.2H694.8" stroke="#fff" stroke-width="0.8"/>
<path d="M749.4 436.6H757.6V442.6H754.6L752.6 444.4V442.6H749.4Z" fill="#e6e6e6"/><path d="M751 438.6H756M751 440.4H755" stroke="#444" stroke-width="0.6"/>
<g fill="#fff"><path d="M10 461.3L14.4 460.7V464.2H10ZM15.1 460.6L20 459.9V464.2H15.1ZM10 464.9H14.4V468.4L10 467.8ZM15.1 464.9H20V469.2L15.1 468.5Z"/></g>
<circle cx="44" cy="462.8" r="3.4" stroke="#333" stroke-width="1.1"/><path d="M41.6 465.4L37.6 469.6" stroke="#333" stroke-width="1.2"/>
<circle cx="258" cy="464.4" r="4.7" stroke="#fff" stroke-width="1.4"/>
<g stroke="#fff" stroke-width="1.1"><rect x="283.768" y="461.556" width="6.384000000000001" height="5.488000000000001"/><path d="M282.4 459.4H291.52M282.4 469.2H291.52M293.344 459.4V462.34M293.344 463.81V469.2" stroke-width="1.2"/></g>
<circle cx="319.6" cy="464.0" r="7.8" fill="url(#edg)"/><path d="M318.82 456.36A7.8 7.8 0 0 1 327.40 464.94C325.84 466.73 323.11 466.73 321.16 464.78C323.50 461.66 321.16 458.15 318.82 456.36Z" fill="url(#edg2)"/><path d="M319.21 463.22C320.77 460.49 323.89 461.66 323.50 464.00C322.72 466.34 325.45 467.28 327.56 465.56L327.01 467.90C324.28 470.24 320.38 468.68 319.21 463.22Z" fill="#38361f"/><path d="M315.31 463.22C314.92 469.46 321.16 471.80 325.84 468.68C321.94 469.85 318.04 467.12 319.21 462.83Z" fill="#0a4a90" opacity="0.75"/>
<path d="M343.2 459.64H348.96L350.4 461.2H357.59999999999997V470.2H343.2Z" fill="#f5b731"/><rect x="343.2" y="462.52" width="14.4" height="7.68" fill="#ffd968"/><rect x="345.792" y="465.64" width="9.216000000000001" height="4.5600000000000005" fill="#3a96dd"/><rect x="347.808" y="467.56" width="5.184" height="2.64" fill="#ffd968"/>
<circle cx="380.5" cy="464.0" r="7.3" fill="url(#ffx)"/><circle cx="382.11" cy="462.54" r="4.38" fill="#2a55c8"/><path d="M375.02 459.25C378.31 460.35 378.31 463.27 381.23 464.37C384.15 465.10 384.88 464.00 386.70 463.27C387.07 470.57 378.31 472.76 374.30 467.29C372.83 464.00 373.56 461.08 375.02 459.25Z" fill="#f0741c"/><path d="M386.70 463.27C387.07 470.57 378.31 472.76 374.30 467.29C379.04 470.94 384.88 469.11 386.70 463.27Z" fill="#ffc531"/>
<rect x="403.6" y="457.2" width="15" height="14.8" fill="#0e3f85"/>
<path d="M438.4 460.4V458.8A1.6 1.6 0 0 1 440 457.2H443A1.6 1.6 0 0 1 444.6 458.8V460.4" stroke="#f2f2f2" stroke-width="1"/><path d="M434.2 460.2H449L448.2 472H435Z" fill="#f2f2f2"/><rect x="438.4" y="462.6" width="2.8" height="2.8" fill="#f25022"/><rect x="441.8" y="462.6" width="2.8" height="2.8" fill="#7fba00"/><rect x="438.4" y="466" width="2.8" height="2.8" fill="#00a4ef"/><rect x="441.8" y="466" width="2.8" height="2.8" fill="#ffb900"/>
<path d="M471.8 464.59999999999997L465.39 460.90A7.4 7.4 0 0 1 478.21 460.90Z" fill="#ea4335"/><path d="M471.8 464.59999999999997L478.21 460.90A7.4 7.4 0 0 1 471.80 472.00Z" fill="#fbbc05"/><path d="M471.8 464.59999999999997L471.80 472.00A7.4 7.4 0 0 1 465.39 460.90Z" fill="#34a853"/><circle cx="471.8" cy="464.59999999999997" r="3.40" fill="#ffffff"/><circle cx="471.8" cy="464.59999999999997" r="2.66" fill="#4285f4"/>
<circle cx="504.168" cy="460.88" r="2.6239999999999997" fill="#5b5fc7"/><circle cx="508.76" cy="462.032" r="1.8039999999999998" fill="#7b83eb"/><rect x="500.56" y="463.76" width="7.38" height="7.2" rx="1.5" fill="#7b83eb"/><rect x="506.792" y="464.048" width="3.6079999999999997" height="5.472" rx="1.2" fill="#5b5fc7"/><rect x="494" y="461.168" width="9.184" height="8.352" rx="1" fill="#4b53bc"/>
<circle cx="507.6" cy="469.6" r="3.1" fill="#d92c2c"/>
<path d="M686 466.6L690 462.8L694 466.6" stroke="#fff" stroke-width="1.1"/>
<rect x="702.4" y="462.6" width="7.4" height="5" stroke="#fff" stroke-width="0.8"/><rect x="703.6" y="463.8" width="3.6" height="2.6" fill="#fff"/><path d="M700 461.4H703.4V463.2" stroke="#fff" stroke-width="0.8"/>
<path d="M715 460.6H724.6V466C724.6 468.4 722 469.8 719.8 470.6C717.6 469.8 715 468.4 715 466Z" fill="#e6e6e6"/><path d="M717 462.4H722.6V466H717Z" fill="#b3262f"/><rect x="720.6" y="466" width="4.6" height="4.6" fill="#d92c2c"/>
<path d="M730.4 467.4A2.6 2.6 0 0 1 731.6 462.6A3.4 3.4 0 0 1 738 463.4A2.2 2.2 0 0 1 738 467.4Z" fill="#d6d6d6"/><circle cx="737" cy="468" r="2.9" fill="#e03030"/><path d="M735.8 466.8L738.2 469.2M738.2 466.8L735.8 469.2" stroke="#fff" stroke-width="0.7"/>
<g stroke="#d0d0d0" stroke-width="0.9"><path d="M746.6 468.8A7.8 7.6 0 0 1 754.4 461.2"/><path d="M748.94 468.8A5.46 5.319999999999999 0 0 1 754.4 463.47999999999996"/><path d="M751.28 468.8A3.12 3.04 0 0 1 754.4 465.76"/></g><circle cx="753.6" cy="468.0" r="0.9" fill="#d0d0d0"/>
<path d="M758.8 463.53H760.6899999999999L763.0 461.43V468.57L760.6899999999999 466.47H758.8Z" stroke="#fff" stroke-width="0.8"/><path d="M764.4699999999999 463.32A2.4 2.4 0 0 1 764.4699999999999 466.68M765.9399999999999 462.06A4 4 0 0 1 765.9399999999999 467.94M767.41 461.01A5.4 5.4 0 0 1 767.41 468.99" stroke="#fff" stroke-width="0.8"/>
<path d="M822.4 459.6H832.6V467.3H829.5L827.5 469.4L825.5 467.3H822.4Z" stroke="#fff" stroke-width="1.1"/><path d="M845.3 452.5V477" stroke="#6a6856" stroke-width="0.6"/>
</svg>
<div id="tx2">
<span class="s" style="left:9px;top:435.6px;font-size:8.6px;line-height:8.6px;color:#ffffff;transform:scaleX(0.7868);-webkit-text-stroke:0.25px #fff;">CARMEN FONSECA VALERO</span>
<span class="s" style="left:406.4px;top:460.66px;font-size:9.5px;line-height:9.5px;color:#ffffff;font-weight:700;transform:scaleX(1.0105);">B.</span>
<span class="s" style="left:484.4px;top:439.05px;font-size:4.6px;line-height:4.6px;color:#ffffff;font-weight:700;transform:scaleX(1.0129);">W</span>
<span class="s" style="left:496.6px;top:462.48px;font-size:7px;line-height:7px;color:#ffffff;font-weight:700;transform:scaleX(1.1212);">T</span>
<span class="s" style="left:458.2px;top:438.36px;font-size:5.6px;line-height:5.6px;color:#ffffff;font-weight:700;transform:scaleX(1.1105);">T</span>
<span class="s" style="left:465.9px;top:443.25px;font-size:4.6px;line-height:4.6px;color:#ffffff;font-weight:700;transform:scaleX(0.7805);">1</span>
<span class="s" style="left:586.3px;top:436.45px;font-size:4.6px;line-height:4.6px;color:#333;font-weight:700;transform:scaleX(0.6531);">!</span>
</div>
</body>
</html>
